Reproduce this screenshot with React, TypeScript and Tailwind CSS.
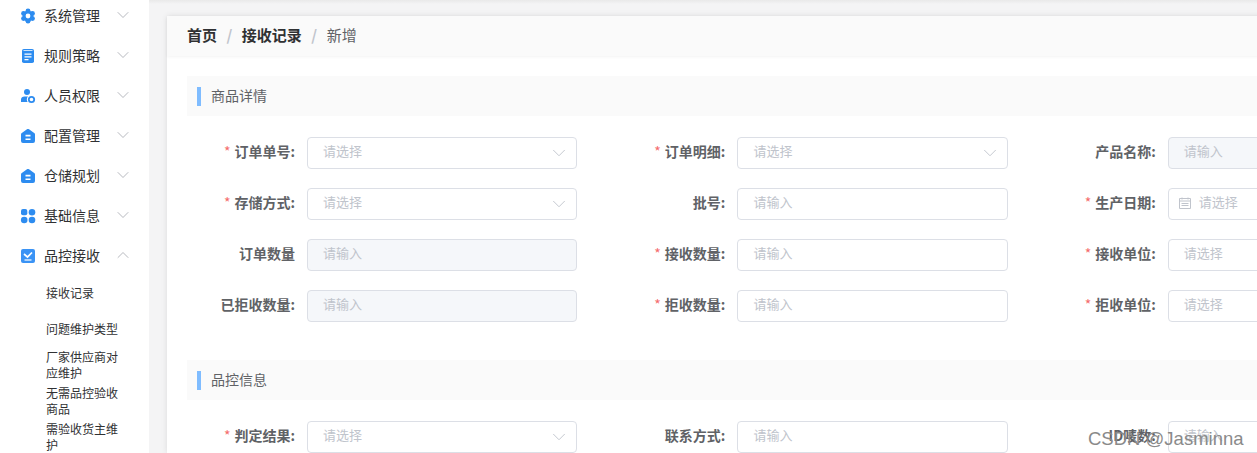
import { ChevronDown, ChevronUp } from "lucide-react";
import type { ReactNode } from "react";

const blue = "#2d8cf0";

const IconGear = () => (
  <svg width="16" height="16" viewBox="0 0 16 16">
    <g fill={blue}>
      <circle cx="8" cy="8" r="5.500" />
      <circle cx="8" cy="2.800" r="2.400" />
      <circle cx="8" cy="13.200" r="2.400" />
      <circle cx="3.500" cy="5.400" r="2.400" />
      <circle cx="12.500" cy="5.400" r="2.400" />
      <circle cx="3.500" cy="10.600" r="2.400" />
      <circle cx="12.500" cy="10.600" r="2.400" />
    </g>
    <circle cx="8" cy="8" r="2.400" fill="#fff" />
  </svg>
);

const IconDoc = () => (
  <svg width="16" height="16" viewBox="0 0 16 16">
    <rect x="2" y="1" width="12" height="14" rx="1.800" fill={blue} />
    <path fill="#fff" d="M3.500 2.300h9v.7h-9zM4.500 5.500h7v1.300h-7zM4.500 8.200h7v1.300h-7zM4.500 10.900h4v1.300h-4z" />
  </svg>
);

const IconUser = () => (
  <svg width="16" height="16" viewBox="0 0 16 16">
    <circle cx="7" cy="4" r="3" fill={blue} />
    <path fill={blue} d="M1 14v-2.500C1 9.500 2.500 8.500 4.500 8.500H8c-.8.8-1.200 1.800-1.200 3 0 1 .3 1.800.8 2.500H1z" />
    <circle cx="11.500" cy="11.500" r="2.700" fill="none" stroke={blue} strokeWidth="1.800" />
  </svg>
);

const IconHouse = () => (
  <svg width="16" height="16" viewBox="0 0 16 16">
    <path
      fill={blue}
      d="M1 6.500c0-.6.300-1.100.8-1.400L7 1.300c.6-.4 1.400-.4 2 0l5.200 3.800c.5.300.8.800.8 1.400V13a2 2 0 01-2 2H3a2 2 0 01-2-2V6.500z"
    />
    <path fill="#fff" d="M5.500 6.800h5v1.600h-5zM5.500 10.500h5v1.600h-5z" />
  </svg>
);

const IconGrid = () => (
  <svg width="16" height="16" viewBox="0 0 16 16" fill={blue}>
    <rect x="1" y="1" width="6.300" height="6.300" rx="2" />
    <circle cx="12" cy="4.200" r="3.300" />
    <circle cx="4.200" cy="12" r="3.300" />
    <circle cx="12" cy="12" r="3.300" />
  </svg>
);

const IconCheck = () => (
  <svg width="16" height="16" viewBox="0 0 16 16">
    <rect x="1" y="1" width="14" height="14" rx="2" fill="#3a93f5" />
    <path d="M4 6l3.500 3L12 4.500" fill="none" stroke="#fff" strokeWidth="1.700" />
    <path d="M4.500 12h7" stroke="#fff" strokeWidth="1.200" />
  </svg>
);

const menu: { label: string; icon: ReactNode }[] = [
  { label: "系统管理", icon: <IconGear /> },
  { label: "规则策略", icon: <IconDoc /> },
  { label: "人员权限", icon: <IconUser /> },
  { label: "配置管理", icon: <IconHouse /> },
  { label: "仓储规划", icon: <IconHouse /> },
  { label: "基础信息", icon: <IconGrid /> },
];

const subMenu = ["接收记录", "问题维护类型", "厂家供应商对应维护", "无需品控验收商品", "需验收货主维护"];

type Field = {
  label: string;
  required?: boolean;
  placeholder: string;
  kind?: "select" | "disabled" | "date";
};

const fields: Field[] = [
  { label: "订单单号:", required: true, placeholder: "请选择", kind: "select" },
  { label: "订单明细:", required: true, placeholder: "请选择", kind: "select" },
  { label: "产品名称:", placeholder: "请输入", kind: "disabled" },
  { label: "存储方式:", required: true, placeholder: "请选择", kind: "select" },
  { label: "批号:", placeholder: "请输入" },
  { label: "生产日期:", required: true, placeholder: "请选择", kind: "date" },
  { label: "订单数量", placeholder: "请输入", kind: "disabled" },
  { label: "接收数量:", required: true, placeholder: "请输入" },
  { label: "接收单位:", required: true, placeholder: "请选择" },
  { label: "已拒收数量:", placeholder: "请输入", kind: "disabled" },
  { label: "拒收数量:", required: true, placeholder: "请输入" },
  { label: "拒收单位:", required: true, placeholder: "请选择" },
];

const qcFields: Field[] = [
  { label: "判定结果:", required: true, placeholder: "请选择", kind: "select" },
  { label: "联系方式:", placeholder: "请输入" },
  { label: "ID唛数:", placeholder: "请输入" },
];

const FormItem = ({ field }: { field: Field }) => (
  <div className="flex h-8 items-center">
    <label className="flex w-[108px] shrink-0 items-center justify-end pb-1 text-sm font-bold text-[#606266]">
      {field.required && <span className="mr-1 font-normal text-[#f56c6c]">*</span>}
      {field.label}
    </label>
    <div
      className={`ml-3 flex h-8 flex-1 items-center rounded border border-[#dcdfe6] pr-3 text-[13px] text-[#c0c4cc] ${
        field.kind === "disabled" ? "bg-[#f5f7fa]" : "bg-white"
      } ${field.kind === "date" ? "pl-[10px]" : "pl-[15px]"}`}
    >
      {field.kind === "date" && (
        <svg width="12" height="12" viewBox="0 0 12 12" fill="none" stroke="#c0c4cc" className="mr-2 mb-0.5 shrink-0">
          <path d="M.5 1.500h11v10H.5zM.5 4h11M3 .5v2M9 .5v2M2.500 6.500h7M2.500 8.500h7" />
        </svg>
      )}
      <span className="flex-1 pb-1">{field.placeholder}</span>
      {field.kind === "select" && <ChevronDown size={22} strokeWidth={1} color="#c0c4cc" className="-mr-[6px]" />}
    </div>
  </div>
);

const SectionTitle = ({ title }: { title: string }) => (
  <div className="flex h-10 items-center bg-[#fafafa] pl-[10px]">
    <span className="h-[19px] w-1 bg-[#7fbcff]" />
    <span className="ml-[10px] pb-0.5 text-sm text-[#606266]">{title}</span>
  </div>
);

const FormGrid = ({ items }: { items: Field[] }) => (
  <div className="grid grid-cols-[repeat(3,390.400px)] gap-x-10 gap-y-[19px]">
    {items.map((field) => (
      <FormItem key={field.label} field={field} />
    ))}
  </div>
);

export default function App() {
  return (
    <div
      className="relative flex h-[453px] w-[1257px] overflow-hidden bg-[#f4f4f5]"
      style={{ fontFamily: '"Noto Sans CJK SC", "Liberation Sans", sans-serif' }}
    >
      <aside className="-mt-1 w-[149px] shrink-0 bg-white text-[#303133]">
        {menu.map((item) => (
          <div key={item.label} className="flex h-10 items-center pl-5 text-sm">
            <span className="w-6 shrink-0">{item.icon}</span>
            <span className="flex-1 pb-0.5">{item.label}</span>
            <ChevronDown size={20} strokeWidth={1} color="#a8abb2" className="mr-4 mb-0.5" />
          </div>
        ))}
        <div className="flex h-10 items-center pl-5 text-sm">
          <span className="w-6 shrink-0">
            <IconCheck />
          </span>
          <span className="flex-1 pb-0.5">品控接收</span>
          <ChevronUp size={20} strokeWidth={1} color="#a8abb2" className="mr-4 mb-0.5" />
        </div>
        {subMenu.map((name) => (
          <div key={name} className="flex h-9 items-center pb-0.5 pl-[46px]">
            <span className="w-[72px] text-xs leading-4">{name}</span>
          </div>
        ))}
      </aside>

      <main className="min-w-0 flex-1">
        <div className="h-1 bg-gradient-to-b from-[#e9e9e9] to-[#f4f4f5]" />
        <div className="mt-3 ml-[18px] w-[1200px] bg-white shadow-[0_0_6px_rgba(0,0,0,0.1)]">
          <div className="flex h-10 items-center bg-[#fafafa] pb-0.5 pl-5 text-[15px] shadow-[0_1px_3px_rgba(0,0,0,0.05)]">
            <span className="font-bold text-[#303133]">首页</span>
            <span className="mx-[9.500px] font-bold text-[#c0c4cc]">/</span>
            <span className="font-bold text-[#303133]">接收记录</span>
            <span className="mx-[9.500px] font-bold text-[#c0c4cc]">/</span>
            <span className="text-[#606266]">新增</span>
          </div>
          <div className="px-5 pt-5">
            <SectionTitle title="商品详情" />
            <div className="mt-[21px]">
              <FormGrid items={fields} />
            </div>
            <div className="mt-[38px]">
              <SectionTitle title="品控信息" />
            </div>
            <div className="mt-[21px]">
              <FormGrid items={qcFields} />
            </div>
          </div>
        </div>
      </main>

      <span
        className="absolute top-[425px] left-[1088px] text-[18.500px] whitespace-nowrap text-[#8a8a8a]"
        style={{ fontFamily: '"Liberation Sans", sans-serif' }}
      >
        CSDN @Jasminna
      </span>
    </div>
  );
}
